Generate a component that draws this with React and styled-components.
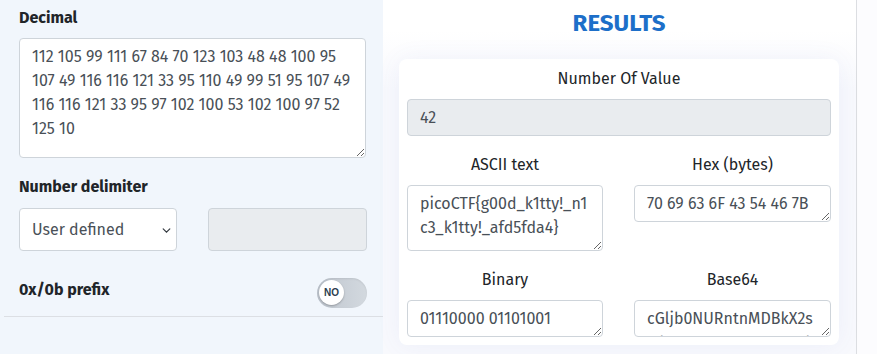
import styled, { createGlobalStyle } from "styled-components";

const FLAG = "picoCTF{g00d_k1tty!_n1c3_k1tty!_afd5fda4}\n";
const codes = Array.from(FLAG).map((c) => c.charCodeAt(0));

const decimalText = codes.join(" ");
const hexText = codes
  .map((n) => n.toString(16).toUpperCase().padStart(2, "0"))
  .join(" ");
const binaryText = codes.map((n) => n.toString(2).padStart(8, "0")).join(" ");
const base64Text = btoa(FLAG);

const GlobalStyle = createGlobalStyle`
  html, body {
    margin: 0;
    padding: 0;
    background: #fcfcfe;
    font-family: "Fira Sans", Roboto, "Noto Sans", sans-serif;
    color: #212529;
  }
  * { box-sizing: border-box; }
`;

const App = () => {
  return (
    <>
      <GlobalStyle />
      <Page>
        <LeftPanel>
          <Options>
            <Label>Decimal</Label>
            <DecimalArea defaultValue={decimalText} />

            <Label $gap={17}>Number delimiter</Label>
            <DelimiterRow>
              <SelectWrap>
                <Select defaultValue="user">
                  <option value="user">User defined</option>
                  <option value="space">Space</option>
                  <option value="comma">Comma</option>
                </Select>
                <Chevron viewBox="0 0 10 6" width="9" height="5">
                  <path d="M1 1l4 4 4-4" fill="none" stroke="#343a40" strokeWidth="1.4" strokeLinecap="round" />
                </Chevron>
              </SelectWrap>
              <DisabledInput disabled />
            </DelimiterRow>

            <PrefixRow>
              <Label>0x/0b prefix</Label>
              <Toggle>
                <Knob>NO</Knob>
              </Toggle>
            </PrefixRow>
          </Options>
          <Divider />
        </LeftPanel>

        <RightPanel>
          <Title>RESULTS</Title>
          <Card>
            <FieldLabel>Number Of Value</FieldLabel>
            <ReadOnlyInput readOnly value="42" />
            <ResultGrid>
              <Field>
                <FieldLabel>ASCII text</FieldLabel>
                <ResultArea $h={66} readOnly value={FLAG} />
              </Field>
              <Field>
                <FieldLabel>Hex (bytes)</FieldLabel>
                <ResultArea $h={37} readOnly value={hexText} />
              </Field>
              <Field>
                <FieldLabel>Binary</FieldLabel>
                <ResultArea $h={37} readOnly value={binaryText} />
              </Field>
              <Field>
                <FieldLabel>Base64</FieldLabel>
                <ResultArea $h={37} readOnly value={base64Text} />
              </Field>
            </ResultGrid>
          </Card>
        </RightPanel>
      </Page>
    </>
  );
};

// layout
const Page = styled.div`
  display: flex;
  width: 877px;
  height: 354px;
  overflow: hidden;
`;

const LeftPanel = styled.div`
  width: 383px;
  flex-shrink: 0;
  background: #f1f6fc;
  padding: 6px 0 0 4px;
`;

const Options = styled.div`
  display: flex;
  flex-direction: column;
  padding: 0 16px 0 15px;
`;

const Label = styled.div`
  font-size: 16px;
  font-weight: 700;
  line-height: 24px;
  color: #212529;
  margin-top: ${(p) => p.$gap || 0}px;
`;

const fieldBase = `
  font-family: "Fira Sans", Roboto, "Noto Sans", sans-serif;
  border: 1px solid #ced4da;
  border-radius: 4px;
  color: #495057;
  outline: none;
`;

const DecimalArea = styled.textarea`
  ${fieldBase}
  display: block;
  width: 347px;
  height: 120px;
  margin-top: 8px;
  padding: 6px 12px;
  font-size: 16px;
  line-height: 24px;
  background: #fff;
  overflow: hidden;
`;

const DelimiterRow = styled.div`
  display: grid;
  grid-template-columns: 158px 159px;
  justify-content: space-between;
  margin-top: 9px;
`;

const SelectWrap = styled.div`
  position: relative;
`;

const Select = styled.select`
  ${fieldBase}
  appearance: none;
  width: 100%;
  height: 43px;
  padding: 0 28px 0 12px;
  font-size: 16px;
  background: #fff;
`;

const Chevron = styled.svg`
  position: absolute;
  right: 6px;
  top: 20px;
  pointer-events: none;
`;

const DisabledInput = styled.input`
  ${fieldBase}
  height: 43px;
  background: #e9ecef;
`;

const PrefixRow = styled.div`
  display: flex;
  justify-content: space-between;
  align-items: center;
  margin-top: 27px;
  height: 29px;

  & > div:first-child {
    margin-top: -6px;
  }
`;

const Toggle = styled.div`
  width: 50px;
  height: 30px;
  border-radius: 15px;
  background: linear-gradient(90deg, #bfc6cf, #d3d9df);
  box-shadow: inset 0 1px 2px rgba(0, 0, 0, 0.08);
  display: flex;
  align-items: center;
  padding-left: 2px;
`;

const Knob = styled.div`
  width: 25px;
  height: 25px;
  border-radius: 50%;
  background: #fff;
  box-shadow: 0 1px 2px rgba(0, 0, 0, 0.25);
  display: flex;
  align-items: center;
  justify-content: center;
  font-family: "Liberation Sans", Arial, sans-serif;
  font-size: 10px;
  font-weight: 700;
  color: #2c3e50;
`;

const Divider = styled.div`
  height: 1px;
  background: #dcdfe4;
  margin-top: 9px;
`;

const RightPanel = styled.div`
  width: 474px;
  flex-shrink: 0;
  background: linear-gradient(180deg, #ffffff 0, #ffffff 30px, #f8f9fd 90px);
  border-right: 1px solid #dcdee2;
  padding: 0 17px 0 16px;
  display: flex;
  flex-direction: column;
`;

const Title = styled.h2`
  margin: 0;
  height: 59px;
  padding-top: 9px;
  text-align: center;
  font-size: 24px;
  line-height: 28px;
  font-weight: 700;
  color: #1d6fc9;
`;

const Card = styled.div`
  background: #fff;
  border-radius: 8px;
  box-shadow: 0 0 24px rgba(90, 100, 200, 0.07);
  padding: 8px;
  display: flex;
  flex-direction: column;
`;

const FieldLabel = styled.div`
  text-align: center;
  font-size: 16px;
  line-height: 24px;
  color: #212529;
  margin-bottom: 8px;
`;

const ReadOnlyInput = styled.input`
  ${fieldBase}
  height: 37px;
  padding: 0 12px;
  font-size: 16px;
  background: #e9ecef;
  margin-bottom: 17px;
`;

const ResultGrid = styled.div`
  display: grid;
  grid-template-columns: 196px 197px;
  justify-content: space-between;
  row-gap: 17px;
  align-items: start;
`;

const Field = styled.div`
  display: flex;
  flex-direction: column;
`;

const ResultArea = styled.textarea`
  ${fieldBase}
  display: block;
  width: 100%;
  height: ${(p) => p.$h}px;
  padding: 6px 12px 0;
  font-size: 16px;
  line-height: 24px;
  background: #fff;
  overflow: hidden;
  overflow-wrap: anywhere;
`;

export default App;
